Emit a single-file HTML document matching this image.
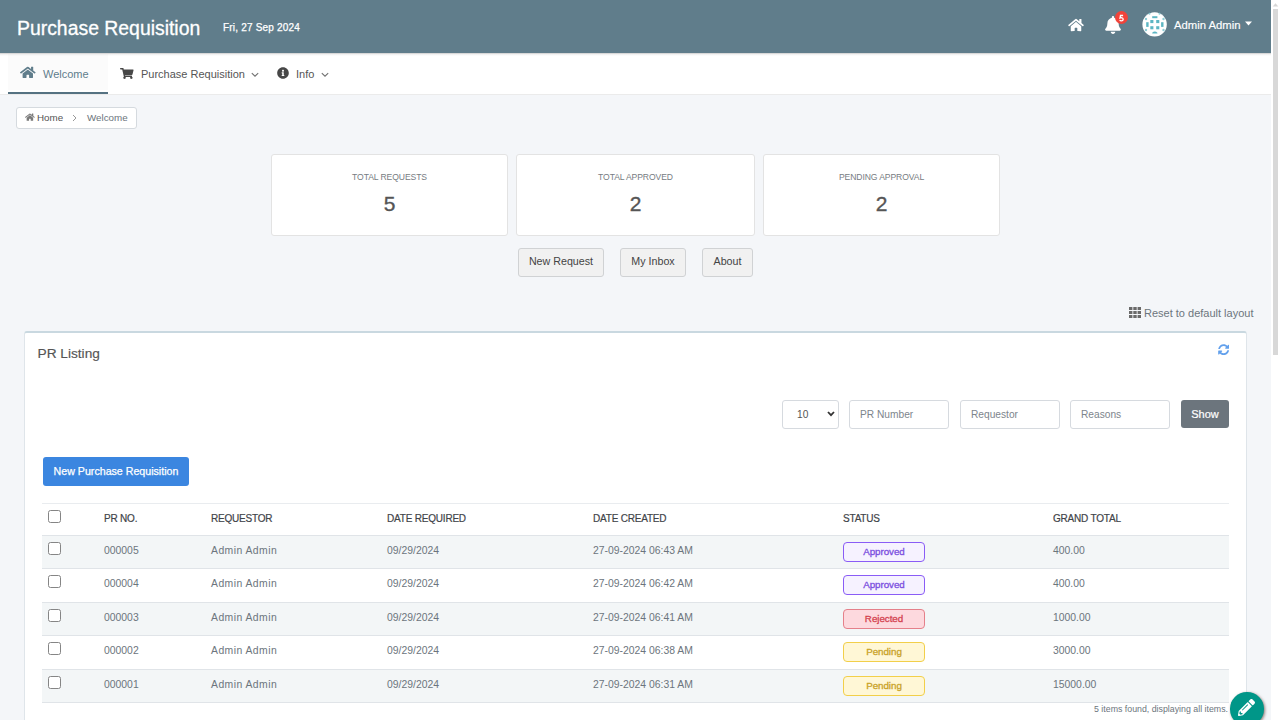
<!DOCTYPE html>
<html><head><meta charset="utf-8">
<style>
*{box-sizing:border-box;margin:0;padding:0}
html,body{width:1280px;height:720px;overflow:hidden}
body{font-family:"Liberation Sans",sans-serif;background:#f4f6f9;position:relative;color:#495057}
.abs{position:absolute}
#hdr{left:0;top:0;width:1271px;height:53px;background:#607d8b;}
#title{left:17px;top:15.5px;font-size:19.4px;color:#fff;-webkit-text-stroke:0.3px #fff;white-space:nowrap;line-height:24px}
#date{left:223px;top:20.7px;font-size:10px;letter-spacing:0.2px;color:#fff;-webkit-text-stroke:0.25px #fff;white-space:nowrap;line-height:13px}
#nav{left:0;top:53px;width:1271px;height:42px;background:#fff;border-bottom:1px solid #ebebeb}
#tab1{left:8px;top:54px;width:100px;height:36px;background:#fbfbfb}
#tabu{left:8px;top:92px;width:100px;height:2px;background:#557282}
.navt{font-size:11px;line-height:14px;white-space:nowrap}
#sb{left:1271px;top:0;width:9px;height:720px;background:#fff}
#thumb{left:1272.5px;top:9px;width:5.5px;height:346px;background:#d8d8d8}
.card{background:#fff;border:1px solid #e3e3e3;border-radius:3px}
.stat-l{font-size:8.6px;letter-spacing:-0.1px;color:#777c82;text-align:center;width:100%;white-space:nowrap}
.stat-n{font-size:21px;color:#555;-webkit-text-stroke:0.35px #555;text-align:center;width:100%}
.btn{background:#f1f1f1;border:1px solid #d0d2d4;border-radius:3px;font-size:10.7px;color:#444;text-align:center;line-height:25px;white-space:nowrap}
.inp{background:#fff;border:1px solid #d6dadf;border-radius:3px;font-size:10.2px;color:#7d858c;line-height:27px;padding-left:10px;white-space:nowrap}
table{border-collapse:collapse}
.th{font-size:10px;letter-spacing:-0.2px;color:#3f4449;white-space:nowrap;-webkit-text-stroke:0.2px #3f4449}
.nm{letter-spacing:0.45px}
.td{font-size:10.4px;color:#6c757d;white-space:nowrap}
.cb{width:13px;height:13px;border:1px solid #858585;border-radius:2.5px;background:#fff}
.badge{width:82px;height:20px;border-radius:4px;border:1.5px solid;font-size:9.8px;letter-spacing:-0.05px;-webkit-text-stroke:0.3px currentColor;text-align:center;line-height:17px}
.ap{background:#f6f2ff;border-color:#8a5cf6;color:#7b4fe0}
.rj{background:#fdd9de;border-color:#e5808a;color:#d4424f}
.pd{background:#fff7d6;border-color:#f2cf4a;color:#c9a227}
</style></head><body>
<div id="hdr" class="abs"></div>
<div id="title" class="abs">Purchase Requisition</div>
<div id="date" class="abs">Fri, 27 Sep 2024</div>

<div id="nav" class="abs"></div>
<div id="tab1" class="abs"></div><div id="tabu" class="abs"></div>
<div class="abs" style="left:0;top:53px;width:1271px;height:3px;background:linear-gradient(rgba(0,0,0,0.22),rgba(0,0,0,0.06) 40%,rgba(0,0,0,0))"></div>


<!-- nav items -->
<svg class="abs" style="left:20.2px;top:66px" width="15.6" height="12.8" viewBox="0 0 576 512" preserveAspectRatio="none"><path fill="#607d8b" d="M280.37 148.26L96 300.11V464a16 16 0 0 0 16 16l112.06-.29a16 16 0 0 0 15.92-16V368a16 16 0 0 1 16-16h64a16 16 0 0 1 16 16v95.64a16 16 0 0 0 16 16.05L464 480a16 16 0 0 0 16-16V300L295.67 148.26a12.19 12.19 0 0 0-15.3 0zM571.6 251.47L488 182.56V44.05a12 12 0 0 0-12-12h-56a12 12 0 0 0-12 12v72.61L318.47 43a48 48 0 0 0-61 0L4.34 251.47a12 12 0 0 0-1.6 16.9l25.5 31A12 12 0 0 0 45.15 301l235.22-193.74a12.19 12.19 0 0 1 15.3 0L530.9 301a12 12 0 0 0 16.9-1.6l25.5-31a12 12 0 0 0-1.7-16.93z"/></svg>
<div class="abs navt" style="left:43px;top:67px;color:#5f7d8c">Welcome</div>

<svg class="abs" style="left:120.2px;top:67.8px" width="13.6" height="11" viewBox="0 0 576 512" preserveAspectRatio="none"><path fill="#474747" d="M528.12 301.319l47.273-208C578.806 78.301 567.391 64 551.99 64H159.208l-9.166-44.81C147.758 8.021 137.93 0 126.529 0H24C10.745 0 0 10.745 0 24v16c0 13.255 10.745 24 24 24h69.883l70.248 343.435C147.325 417.1 136 435.222 136 456c0 30.928 25.072 56 56 56s56-25.072 56-56c0-15.674-6.447-29.835-16.824-40h209.647C430.447 426.165 424 440.326 424 456c0 30.928 25.072 56 56 56s56-25.072 56-56c0-22.172-12.888-41.332-31.579-50.405l5.517-24.276c3.413-15.018-8.002-29.319-23.403-29.319H218.117l-6.545-32h293.145c11.206 0 20.92-7.754 23.403-18.681z"/></svg>
<div class="abs navt" style="left:141px;top:67px;color:#555">Purchase Requisition</div>
<svg class="abs" style="left:251px;top:72px" width="8" height="6" viewBox="0 0 8 6"><path d="M0.8 1.2L4 4.2L7.2 1.2" fill="none" stroke="#707070" stroke-width="1.1"/></svg>

<svg class="abs" style="left:277px;top:66.6px" width="12" height="12" viewBox="0 0 512 512"><path fill="#474747" d="M256 8C119.043 8 8 119.083 8 256c0 136.997 111.043 248 248 248s248-111.003 248-248C504 119.083 392.957 8 256 8zm0 110c23.196 0 42 18.804 42 42s-18.804 42-42 42-42-18.804-42-42 18.804-42 42-42zm56 254c0 6.627-5.373 12-12 12h-88c-6.627 0-12-5.373-12-12v-24c0-6.627 5.373-12 12-12h12v-64h-12c-6.627 0-12-5.373-12-12v-24c0-6.627 5.373-12 12-12h64c6.627 0 12 5.373 12 12v100h12c6.627 0 12 5.373 12 12v24z"/></svg>
<div class="abs navt" style="left:296px;top:67px;color:#555">Info</div>
<svg class="abs" style="left:321px;top:72px" width="8" height="6" viewBox="0 0 8 6"><path d="M0.8 1.2L4 4.2L7.2 1.2" fill="none" stroke="#707070" stroke-width="1.1"/></svg>

<!-- header right -->
<svg class="abs" style="left:1068px;top:18px" width="16" height="14" viewBox="0 0 576 512"><path fill="#fff" d="M280.37 148.26L96 300.11V464a16 16 0 0 0 16 16l112.06-.29a16 16 0 0 0 15.920-16V368a16 16 0 0 1 16-16h64a16 16 0 0 1 16 16v95.64a16 16 0 0 0 16 16.05L464 480a16 16 0 0 0 16-16V300L295.67 148.26a12.19 12.19 0 0 0-15.3 0zM571.6 251.47L488 182.56V44.05a12 12 0 0 0-12-12h-56a12 12 0 0 0-12 12v72.61L318.47 43a48 48 0 0 0-61 0L4.34 251.47a12 12 0 0 0-1.6 16.9l25.5 31A12 12 0 0 0 45.15 301l235.22-193.74a12.19 12.19 0 0 1 15.3 0L530.9 301a12 12 0 0 0 16.9-1.6l25.5-31a12 12 0 0 0-1.7-16.93z"/></svg>
<svg class="abs" style="left:1105px;top:16px" width="16" height="18" viewBox="0 0 448 512"><path fill="#fff" d="M224 512c35.32 0 63.97-28.65 63.97-64H160.03c0 35.35 28.65 64 63.97 64zm215.39-149.71c-19.32-20.76-55.47-51.99-55.47-154.29 0-77.7-54.48-139.9-127.94-155.16V32c0-17.67-14.32-32-31.98-32s-31.98 14.33-31.98 32v20.84C118.56 68.1 64.08 130.3 64.08 208c0 102.3-36.15 133.53-55.47 154.29-6 6.45-8.66 14.16-8.61 21.71.11 16.4 12.98 32 32.1 32h383.8c19.12 0 32-15.6 32.1-32 .05-7.55-2.61-15.27-8.61-21.71z"/></svg>
<div class="abs" style="left:1115px;top:11px;width:13px;height:13px;border-radius:50%;background:#f1433a"></div><svg class="abs" style="left:1115px;top:11px" width="13" height="13" viewBox="0 0 13 13"><path d="M8.1 4.5H5.5L5.1 6.9Q5.6 6.6 6.3 6.6Q8.2 6.7 8.2 8.2Q8.1 9.8 6.3 9.9Q5.2 9.9 4.6 9.3" fill="none" stroke="#fff" stroke-width="1.35"/></svg>
<svg class="abs" style="left:1138px;top:8px" width="34" height="34" viewBox="0 0 34 34"><circle cx="16.6" cy="16.4" r="12.2" fill="#fff"/><g fill="#5cb6c3"><rect x="12.3" y="12" width="3.1" height="3.1"/><rect x="18.2" y="12" width="3.1" height="3.1"/><rect x="12.3" y="18.2" width="3.1" height="3.1"/><rect x="18.2" y="18.2" width="3.1" height="3.1"/><path d="M14.2 8.2h5.2v2h-5.2z"/><path d="M14.2 24.8q2.6-2.6 5.2 0v0.8h-5.2z"/><path d="M8.2 14.2h2.4v4.7h-2.4z"/><path d="M23.1 14.2h2.4v4.7h-2.4z"/></g><g fill="#8fcdd6"><circle cx="8" cy="11" r="1.2"/><circle cx="25.5" cy="11" r="1.2"/><circle cx="8" cy="22" r="1.2"/><circle cx="25.5" cy="22" r="1.2"/><circle cx="11.5" cy="5.8" r="1"/><circle cx="21.5" cy="5.8" r="1"/></g></svg>
<div class="abs navt" style="left:1174px;top:17.5px;color:#fff;font-size:11.3px;-webkit-text-stroke:0.15px #fff">Admin Admin</div>
<svg class="abs" style="left:1245px;top:21px" width="7" height="5" viewBox="0 0 7 5"><path d="M0 0.5H7L3.5 4.5Z" fill="#fff"/></svg>

<!-- breadcrumb -->
<div class="abs" style="left:16px;top:107px;width:121px;height:22px;background:#fff;border:1px solid #d5dadf;border-radius:3px"></div>
<svg class="abs" style="left:25px;top:113.3px" width="9.8" height="8.2" viewBox="0 0 576 512" preserveAspectRatio="none"><path fill="#7a7a7a" d="M280.37 148.26L96 300.11V464a16 16 0 0 0 16 16l112.06-.29a16 16 0 0 0 15.92-16V368a16 16 0 0 1 16-16h64a16 16 0 0 1 16 16v95.64a16 16 0 0 0 16 16.05L464 480a16 16 0 0 0 16-16V300L295.67 148.26a12.19 12.19 0 0 0-15.3 0zM571.6 251.47L488 182.56V44.05a12 12 0 0 0-12-12h-56a12 12 0 0 0-12 12v72.61L318.47 43a48 48 0 0 0-61 0L4.34 251.47a12 12 0 0 0-1.6 16.9l25.5 31A12 12 0 0 0 45.15 301l235.22-193.74a12.19 12.19 0 0 1 15.3 0L530.9 301a12 12 0 0 0 16.9-1.6l25.5-31a12 12 0 0 0-1.7-16.93z"/></svg>
<div class="abs" style="left:37px;top:111px;font-size:9.8px;color:#555;line-height:13px">Home</div>
<svg class="abs" style="left:72px;top:114px" width="5" height="8" viewBox="0 0 5 8"><path d="M1 1L4 4L1 7" fill="none" stroke="#999" stroke-width="1"/></svg>
<div class="abs" style="left:87px;top:111px;font-size:9.8px;color:#6c757d;line-height:13px">Welcome</div>

<!-- stat cards -->
<div class="abs card" style="left:271px;top:154px;width:237px;height:82px"></div>
<div class="abs card" style="left:516px;top:154px;width:239px;height:82px"></div>
<div class="abs card" style="left:763px;top:154px;width:237px;height:82px"></div>
<div class="abs stat-l" style="left:271px;top:171.5px;width:237px">TOTAL REQUESTS</div>
<div class="abs stat-l" style="left:516px;top:171.5px;width:239px">TOTAL APPROVED</div>
<div class="abs stat-l" style="left:763px;top:171.5px;width:237px">PENDING APPROVAL</div>
<div class="abs stat-n" style="left:271px;top:192px;width:237px">5</div>
<div class="abs stat-n" style="left:516px;top:192px;width:239px">2</div>
<div class="abs stat-n" style="left:763px;top:192px;width:237px">2</div>

<div class="abs btn" style="left:518px;top:248px;width:86px;height:29px">New Request</div>
<div class="abs btn" style="left:620px;top:248px;width:66px;height:29px">My Inbox</div>
<div class="abs btn" style="left:702px;top:248px;width:51px;height:29px">About</div>

<!-- reset layout -->
<svg class="abs" style="left:1129px;top:307px" width="12" height="11" viewBox="0 0 12 11"><g fill="#6a6a6a"><rect x="0" y="0" width="3.4" height="3"/><rect x="4.3" y="0" width="3.4" height="3"/><rect x="8.6" y="0" width="3.4" height="3"/><rect x="0" y="4" width="3.4" height="3"/><rect x="4.3" y="4" width="3.4" height="3"/><rect x="8.6" y="4" width="3.4" height="3"/><rect x="0" y="8" width="3.4" height="3"/><rect x="4.3" y="8" width="3.4" height="3"/><rect x="8.6" y="8" width="3.4" height="3"/></g></svg>
<div class="abs" style="left:1144px;top:306px;font-size:11px;color:#6c757d;line-height:14px;white-space:nowrap">Reset to default layout</div>

<!-- PR listing card -->
<div class="abs" style="left:24px;top:331px;width:1223px;height:400px;background:#fff;border:1px solid #dfe5ea;border-top:2px solid #c9d8e0;border-radius:3px"></div>
<div class="abs" style="left:37.5px;top:344.5px;font-size:13.7px;color:#555;-webkit-text-stroke:0.15px #555;line-height:17px;white-space:nowrap">PR Listing</div>
<svg class="abs" style="left:1218px;top:343.7px" width="11.3" height="11.3" viewBox="0 0 512 512"><path fill="#62a0ec" d="M370.72 133.28C339.458 104.008 298.888 87.962 255.848 88c-77.458.068-144.328 53.178-162.791 126.85-1.344 5.363-6.122 9.15-11.651 9.15H24.103c-7.498 0-13.194-6.807-11.807-14.176C33.933 94.924 134.813 8 256 8c66.448 0 126.791 26.136 171.315 68.685L463.03 40.97C478.149 25.851 504 36.559 504 57.941V192c0 13.255-10.745 24-24 24H345.941c-21.382 0-32.09-25.851-16.971-40.971l41.75-41.749zM32 296h134.059c21.382 0 32.09 25.851 16.971 40.971l-41.75 41.75c31.262 29.273 71.835 45.319 114.876 45.28 77.418-.07 144.315-53.144 162.787-126.849 1.344-5.363 6.122-9.15 11.651-9.15h57.304c7.498 0 13.194 6.807 11.807 14.176C478.067 417.076 377.187 504 256 504c-66.448 0-126.791-26.136-171.315-68.685L48.97 471.03C33.851 486.149 8 475.441 8 454.059V320c0-13.255 10.745-24 24-24z"/></svg>

<!-- filters -->
<div class="abs inp" style="left:782px;top:400px;width:57px;height:29px;padding-left:14px;color:#555">10</div>
<svg class="abs" style="left:827px;top:411px" width="8" height="6" viewBox="0 0 8 6"><path d="M1 1L4 4.2L7 1" fill="none" stroke="#333" stroke-width="1.8"/></svg>
<div class="abs inp" style="left:849px;top:400px;width:100px;height:29px">PR Number</div>
<div class="abs inp" style="left:960px;top:400px;width:100px;height:29px">Requestor</div>
<div class="abs inp" style="left:1070px;top:400px;width:100px;height:29px">Reasons</div>
<div class="abs" style="left:1181px;top:400px;width:48px;height:28px;background:#6c757d;border-radius:3px;color:#fff;font-size:11px;-webkit-text-stroke:0.2px #fff;text-align:center;line-height:28px">Show</div>

<div class="abs" style="left:43px;top:457px;width:146px;height:29px;background:#3b86e0;border-radius:3px;color:#fff;font-size:10.65px;-webkit-text-stroke:0.25px #fff;text-align:center;line-height:29px;white-space:nowrap">New Purchase Requisition</div>

<!-- table -->
<div class="abs" style="left:42px;top:535px;width:1187px;height:33px;background:#f3f6f7"></div>
<div class="abs" style="left:42px;top:602px;width:1187px;height:33px;background:#f3f6f7"></div>
<div class="abs" style="left:42px;top:669px;width:1187px;height:33px;background:#f3f6f7"></div>
<div class="abs" style="left:42px;top:503px;width:1187px;height:1px;background:#e9ecef"></div>
<div class="abs" style="left:42px;top:535px;width:1187px;height:1px;background:#e0e4e8"></div>
<div class="abs" style="left:42px;top:568px;width:1187px;height:1px;background:#e0e4e8"></div>
<div class="abs" style="left:42px;top:602px;width:1187px;height:1px;background:#e0e4e8"></div>
<div class="abs" style="left:42px;top:635px;width:1187px;height:1px;background:#e0e4e8"></div>
<div class="abs" style="left:42px;top:669px;width:1187px;height:1px;background:#e0e4e8"></div>
<div class="abs" style="left:42px;top:702px;width:1187px;height:1px;background:#e0e4e8"></div>
<div class="abs cb" style="left:48px;top:510px"></div>
<div class="abs th" style="left:104px;top:513px">PR NO.</div>
<div class="abs th" style="left:211px;top:513px">REQUESTOR</div>
<div class="abs th" style="left:387px;top:513px">DATE REQUIRED</div>
<div class="abs th" style="left:593px;top:513px">DATE CREATED</div>
<div class="abs th" style="left:843px;top:513px">STATUS</div>
<div class="abs th" style="left:1053px;top:513px">GRAND TOTAL</div>
<div class="abs cb" style="left:48px;top:542px"></div>
<div class="abs td" style="left:104px;top:544.5px">000005</div>
<div class="abs td" style="left:211px;top:544.5px"><span class="nm">Admin Admin</span></div>
<div class="abs td" style="left:387px;top:544.5px">09/29/2024</div>
<div class="abs td" style="left:593px;top:544.5px">27-09-2024 06:43 AM</div>
<div class="abs td" style="left:1053px;top:544.5px">400.00</div>
<div class="abs badge ap" style="left:843px;top:542px">Approved</div>
<div class="abs cb" style="left:48px;top:575px"></div>
<div class="abs td" style="left:104px;top:577.5px">000004</div>
<div class="abs td" style="left:211px;top:577.5px"><span class="nm">Admin Admin</span></div>
<div class="abs td" style="left:387px;top:577.5px">09/29/2024</div>
<div class="abs td" style="left:593px;top:577.5px">27-09-2024 06:42 AM</div>
<div class="abs td" style="left:1053px;top:577.5px">400.00</div>
<div class="abs badge ap" style="left:843px;top:575px">Approved</div>
<div class="abs cb" style="left:48px;top:609px"></div>
<div class="abs td" style="left:104px;top:611.5px">000003</div>
<div class="abs td" style="left:211px;top:611.5px"><span class="nm">Admin Admin</span></div>
<div class="abs td" style="left:387px;top:611.5px">09/29/2024</div>
<div class="abs td" style="left:593px;top:611.5px">27-09-2024 06:41 AM</div>
<div class="abs td" style="left:1053px;top:611.5px">1000.00</div>
<div class="abs badge rj" style="left:843px;top:609px">Rejected</div>
<div class="abs cb" style="left:48px;top:642px"></div>
<div class="abs td" style="left:104px;top:644.5px">000002</div>
<div class="abs td" style="left:211px;top:644.5px"><span class="nm">Admin Admin</span></div>
<div class="abs td" style="left:387px;top:644.5px">09/29/2024</div>
<div class="abs td" style="left:593px;top:644.5px">27-09-2024 06:38 AM</div>
<div class="abs td" style="left:1053px;top:644.5px">3000.00</div>
<div class="abs badge pd" style="left:843px;top:642px">Pending</div>
<div class="abs cb" style="left:48px;top:676px"></div>
<div class="abs td" style="left:104px;top:678.5px">000001</div>
<div class="abs td" style="left:211px;top:678.5px"><span class="nm">Admin Admin</span></div>
<div class="abs td" style="left:387px;top:678.5px">09/29/2024</div>
<div class="abs td" style="left:593px;top:678.5px">27-09-2024 06:31 AM</div>
<div class="abs td" style="left:1053px;top:678.5px">15000.00</div>
<div class="abs badge pd" style="left:843px;top:676px">Pending</div>
<div class="abs" style="left:1028px;width:200px;text-align:right;top:704px;font-size:8.8px;color:#6c757d;white-space:nowrap">5 items found, displaying all items.</div>
<div class="abs" style="left:1230px;top:692px;width:33.5px;height:33.5px;border-radius:50%;background:#009688;box-shadow:1px 1px 3px rgba(60,20,10,0.55)"></div>
<svg class="abs" style="left:1238px;top:699px" width="17" height="17" viewBox="0 0 512 512"><path fill="#fff" d="M497.9 142.1l-46.1 46.1c-4.7 4.7-12.3 4.7-17 0l-111-111c-4.7-4.7-4.7-12.3 0-17l46.1-46.1c18.7-18.7 49.1-18.7 67.9 0l60.1 60.1c18.8 18.7 18.8 49.1 0 67.9zM284.2 99.8L21.6 362.4.4 483.9c-2.9 16.4 11.4 30.6 27.8 27.8l121.5-21.3 262.6-262.6c4.7-4.7 4.7-12.3 0-17l-111-111c-4.8-4.7-12.4-4.7-17.1 0zM124.1 339.9c-5.5-5.5-5.5-14.3 0-19.8l154-154c5.5-5.5 14.3-5.5 19.8 0s5.5 14.3 0 19.8l-154 154c-5.5 5.5-14.3 5.5-19.8 0zM88 424h48v36.3l-64.5 11.3-31.1-31.1L51.7 376H88v48z"/></svg>

<div id="sb" class="abs"></div>
<div id="thumb" class="abs"></div>
<svg class="abs" style="left:1272px;top:3px" width="7" height="4" viewBox="0 0 7 4"><path d="M3.5 0.3L6.3 3.6H0.7Z" fill="#d6d6d6"/></svg>
</body></html>
